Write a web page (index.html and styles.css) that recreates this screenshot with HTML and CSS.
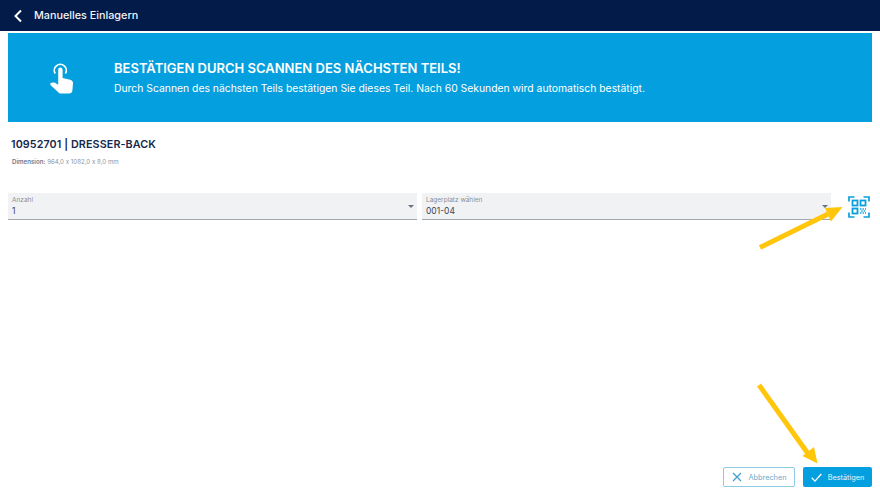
FILE: index.html
```html
<!DOCTYPE html>
<html lang="de">
<head>
<meta charset="utf-8">
<title>Manuelles Einlagern</title>
<link rel="stylesheet" href="styles.css">
</head>
<body>
<div class="page">
  <header class="topbar">
    <svg class="back" width="10" height="14" viewBox="0 0 10 14"><path d="M8 1.500 2.500 7 8 12.500" fill="none" stroke="#fff" stroke-width="2"/></svg>
    <span class="topbar-title">Manuelles Einlagern</span>
  </header>
  <section class="banner">
    <svg class="touch" width="24" height="32" viewBox="0 0 24 32">
      <path d="M5.200 10.500a6 6 0 1 1 10.200 0" fill="none" stroke="#fff" stroke-width="1.700"/>
      <path fill="#fff" d="M8.200 6.800a2.200 2.200 0 0 1 4.400 0V15l7.600 1.800c1.600.4 2.800 1.600 2.800 3.200l-.6 7.500c-.2 2-1.500 3-3.200 3H11c-1.200 0-2.200-.5-3-1.500L.7 22.300c-.8-1-.4-2.200.8-2.500l3-.3 3.700 2.200z"/>
    </svg>
    <div class="banner-text">
      <h1 class="banner-title">BESTÄTIGEN DURCH SCANNEN DES NÄCHSTEN TEILS!</h1>
      <p class="banner-sub">Durch Scannen des nächsten Teils bestätigen Sie dieses Teil. Nach 60 Sekunden wird automatisch bestätigt.</p>
    </div>
  </section>
  <section class="part">
    <h2 class="part-title">10952701 | DRESSER-BACK</h2>
    <p class="part-dim"><b>Dimension:</b> 964,0 x 1082,0 x 8,0 mm</p>
  </section>
  <section class="fields">
    <div class="field">
      <span class="field-label">Anzahl</span>
      <span class="field-value">1</span>
      <i class="caret"></i>
    </div>
    <div class="field">
      <span class="field-label">Lagerplatz wählen</span>
      <span class="field-value">001-04</span>
      <i class="caret"></i>
    </div>
    <svg class="scan" width="22" height="22" viewBox="0 0 22 22" fill="none" stroke="#0a9fdc">
      <path stroke-width="1.700" d="M1 5.500V1h5.500M15.500 1H21v4.500M1 16.500V21h5.500M15.500 21H21v-4.500"/>
      <rect x="4.500" y="4.500" width="5" height="5" stroke-width="1.800"/>
      <rect x="12.500" y="4.500" width="5" height="5" stroke-width="1.800"/>
      <rect x="4.500" y="12.500" width="5" height="5" stroke-width="1.800"/>
      <path stroke-width="1.300" stroke-dasharray="1.400 1.100" d="M12 13h6M13.200 15h5M12 17h6"/>
    </svg>
  </section>
  <footer class="actions">
    <button class="btn btn-outline" type="button">
      <svg width="10" height="10" viewBox="0 0 10 10"><path d="M1 1l8 8M9 1l-8 8" stroke="#3b9fd0" stroke-width="1.200" fill="none"/></svg>
      <span>Abbrechen</span>
    </button>
    <button class="btn btn-solid" type="button">
      <svg width="11" height="9" viewBox="0 0 11 9"><path d="M.7 4.800l3.300 3.300L10.300 1" stroke="#fff" stroke-width="1.300" fill="none"/></svg>
      <span>Bestätigen</span>
    </button>
  </footer>
  <svg class="arrows" width="880" height="496" viewBox="0 0 880 496">
    <path d="M760 247.500 828 214" stroke="#ffc60b" stroke-width="5" fill="none"/>
    <path d="M842.500 207 825 208 831 221.500z" fill="#ffc60b"/>
    <path d="M759 385 809 455" stroke="#ffc60b" stroke-width="5" fill="none"/>
    <path d="M817.500 463.500 802.500 456 814 447z" fill="#ffc60b"/>
  </svg>
</div>
</body>
</html>
```
FILE: styles.css
```css
* { box-sizing: border-box; }
html, body { margin: 0; padding: 0; background: #fff; }
.page {
  position: relative;
  width: 880px;
  height: 496px;
  overflow: hidden;
  display: flex;
  flex-direction: column;
  font-family: Inter, "Liberation Sans", sans-serif;
}
.topbar {
  height: 31px;
  flex: none;
  background: #021b48;
  color: #f2f4f7;
  display: flex;
  align-items: center;
  padding-left: 13px;
  gap: 11px;
}
.topbar-title { font-size: 10.800px; font-weight: 500; }
.banner {
  flex: none;
  height: 89px;
  margin: 2px 8px 0;
  background: #049fde;
  color: #fff;
  display: flex;
  align-items: center;
  padding-left: 42px;
  gap: 40px;
}
.touch { flex: none; margin-top: 2px; }
.banner-title { margin: 0 0 6px; font-size: 13px; line-height: 16px; font-weight: 600; }
.banner-sub { margin: 0; font-size: 10.370px; line-height: 14px; font-weight: 400; }
.part { flex: none; padding: 16px 0 0 11px; color: #16294d; }
.part-title { margin: 0; font-size: 10.750px; line-height: 14px; font-weight: 600; letter-spacing: .1px; }
.part-dim { margin: 5px 0 0 1px; font-size: 6.150px; line-height: 10px; color: #8d95a3; }
.part-dim b { font-weight: 600; color: #6f7a8c; }
.fields {
  flex: none;
  display: flex;
  align-items: flex-start;
  gap: 5px;
  margin-top: 26px;
  padding-left: 8px;
}
.field {
  position: relative;
  width: 409px;
  height: 27px;
  background: #f1f2f4;
  border-bottom: 1px solid #a4a8ae;
  padding: 3px 4px 0;
  display: flex;
  flex-direction: column;
}
.field-label { font-size: 6.500px; line-height: 8px; color: #8a8f98; }
.field-value { font-size: 8.500px; line-height: 12px; color: #3c4452; margin-top: 1px; }
.caret {
  position: absolute;
  right: 3px;
  top: 12px;
  border: 3px solid transparent;
  border-top: 3px solid #6b7280;
  border-bottom: 0;
}
.scan { flex: none; margin-left: 12px; margin-top: 3px; }
.actions {
  margin-top: auto;
  display: flex;
  justify-content: flex-end;
  gap: 8px;
  padding: 0 8px 9px 0;
}
.btn {
  height: 20px;
  border-radius: 2px;
  font: 400 7.300px Inter, "Liberation Sans", sans-serif;
  display: flex;
  align-items: center;
  justify-content: center;
  padding: 0;
}
.btn-outline { width: 72px; gap: 7px; background: #fff; border: 1px solid #8dcbe6; color: #6ea9cc; }
.btn-solid { width: 69px; gap: 6px; background: #049fde; border: 0; color: #e8f6fc; }
.arrows { position: absolute; left: 0; top: 0; pointer-events: none; }
```
